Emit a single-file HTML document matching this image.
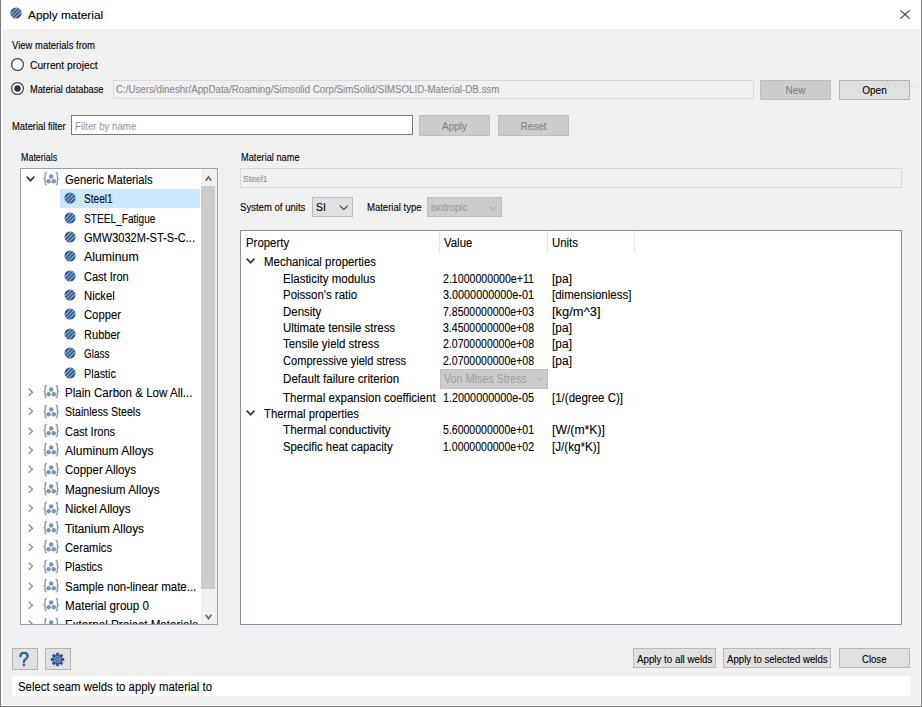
<!DOCTYPE html><html><head><meta charset="utf-8"><style>
html,body{margin:0;padding:0;width:922px;height:707px;overflow:hidden;background:#f0f0f0;}
body{position:relative;font-family:"Liberation Sans",sans-serif;}
.t{position:absolute;white-space:pre;line-height:normal;-webkit-text-stroke:0.1px currentColor;}
.b{position:absolute;box-sizing:content-box;}
svg.b{overflow:visible;}
</style></head><body>
<div class="b" style="left:0px;top:0px;width:922px;height:707px;background:#f0f0f0;"></div>
<div class="b" style="left:0px;top:0px;width:922px;height:29px;background:#ffffff;"></div>
<div class="b" style="left:0px;top:0px;width:1px;height:707px;background:#7a7a7a;"></div>
<div class="b" style="left:921px;top:0px;width:1px;height:707px;background:#7a7a7a;"></div>
<div class="b" style="left:0px;top:706px;width:922px;height:1px;background:#7a7a7a;"></div>
<div class="b" style="left:1px;top:29px;width:1px;height:677px;background:#ffffff;"></div>
<div class="b" style="left:920px;top:29px;width:1px;height:677px;background:#ffffff;"></div>
<div class="b" style="left:1px;top:705px;width:920px;height:1px;background:#ffffff;"></div>
<svg class="b" style="left:9.25px;top:6.4px;" width="14" height="14" viewBox="0 0 14 14"><defs><clipPath id="c162_134"><circle cx="7" cy="7" r="5.6"/></clipPath></defs><circle cx="7" cy="7" r="5.6" fill="#2a5a90"/><g clip-path="url(#c162_134)" stroke="#98afcb" stroke-width="1.1"><line x1="-4.94" y1="15.06" x2="15.06" y2="-4.94" /><line x1="-3.00" y1="17.00" x2="17.00" y2="-3.00" /><line x1="-1.06" y1="18.94" x2="18.94" y2="-1.06" /></g></svg>
<div class="t" style="left:28.1px;top:8.00px;font-size:11.6px;color:#000;transform:scaleX(1.0236);transform-origin:0 0;">Apply material</div>
<svg class="b" style="left:900px;top:10px;" width="10" height="9" viewBox="0 0 10 9"><path d="M0.3,0.3 L9.7,8.7 M9.7,0.3 L0.3,8.7" stroke="#333" stroke-width="1.1" fill="none"/></svg>
<div class="t" style="left:11.5px;top:40.00px;font-size:10.0px;color:#000;transform:scaleX(0.9472);transform-origin:0 0;">View materials from</div>
<svg class="b" style="left:11px;top:58px;" width="14" height="14" viewBox="0 0 14 14"><circle cx="6.5" cy="6.5" r="5.9" fill="#fff" stroke="#4a4a4a" stroke-width="1.3"/></svg>
<div class="t" style="left:30px;top:60.00px;font-size:10.0px;color:#000;transform:scaleX(1.0236);transform-origin:0 0;">Current project</div>
<svg class="b" style="left:11px;top:82px;" width="14" height="14" viewBox="0 0 14 14"><circle cx="6.5" cy="6.5" r="5.9" fill="#fff" stroke="#4a4a4a" stroke-width="1.3"/><circle cx="6.5" cy="6.5" r="3.2" fill="#333"/></svg>
<div class="t" style="left:30px;top:84.00px;font-size:10.0px;color:#000;transform:scaleX(0.9245);transform-origin:0 0;">Material database</div>
<div class="b" style="left:113px;top:79.5px;width:639px;height:17px;background:#f0f0f0;border:1px solid #d9d9d9;"></div>
<div class="t" style="left:116.4px;top:84.00px;font-size:10.0px;color:#8a8a8a;transform:scaleX(0.9728);transform-origin:0 0;">C:/Users/dineshr/AppData/Roaming/Simsolid Corp/SimSolid/SIMSOLID-Material-DB.ssm</div>
<div class="b" style="left:760px;top:79.5px;width:69px;height:18px;background:#cccccc;border:1px solid #bfbfbf;"></div>
<div class="t" style="left:695.5px;width:200px;text-align:center;top:85.00px;font-size:10.0px;color:#838383">New</div>
<div class="b" style="left:839px;top:79.5px;width:69px;height:18px;background:#e1e1e1;border:1px solid #b3b5b8;"></div>
<div class="t" style="left:774.5px;width:200px;text-align:center;top:85.00px;font-size:10.0px;color:#000">Open</div>
<div class="b" style="left:870px;top:70px;width:50px;height:30px;overflow:hidden;"><div class="t" style="left:11.5px;top:7.8px;font-size:11px;color:rgba(0,0,0,0.07);-webkit-text-stroke:0">Windows</div></div>
<div class="t" style="left:11.7px;top:121.00px;font-size:10.0px;color:#000;transform:scaleX(0.9380);transform-origin:0 0;">Material filter</div>
<div class="b" style="left:71px;top:115px;width:340px;height:18px;background:#ffffff;border:1px solid #7a7a7a;"></div>
<div class="t" style="left:74.8px;top:121.00px;font-size:10.0px;color:#9a9a9a;transform:scaleX(0.9675);transform-origin:0 0;">Filter by name</div>
<div class="b" style="left:419px;top:115px;width:69px;height:19px;background:#cccccc;border:1px solid #bfbfbf;"></div>
<div class="t" style="left:354.5px;width:200px;text-align:center;top:121.00px;font-size:10.0px;color:#838383">Apply</div>
<div class="b" style="left:498px;top:115px;width:69px;height:19px;background:#cccccc;border:1px solid #bfbfbf;"></div>
<div class="t" style="left:433.5px;width:200px;text-align:center;top:121.00px;font-size:10.0px;color:#838383">Reset</div>
<div class="t" style="left:20.7px;top:152.00px;font-size:10.0px;color:#000;transform:scaleX(0.8921);transform-origin:0 0;">Materials</div>
<div class="b" style="left:20px;top:168px;width:196px;height:455px;background:#ffffff;border:1px solid #9aa0a6;"></div>
<div class="b" style="left:201px;top:169px;width:16px;height:455px;background:#f0f0f0;"></div>
<div class="b" style="left:201px;top:186px;width:14px;height:403px;background:#cdcdcd;"></div>
<svg class="b" style="left:205px;top:175.5px;" width="7" height="6" viewBox="0 0 7 6"><polyline points="0.7,4.7 3.5,0.9 6.3,4.7" fill="none" stroke="#606060" stroke-width="1.6"/></svg>
<svg class="b" style="left:205px;top:613.5px;" width="7" height="6" viewBox="0 0 7 6"><polyline points="0.7,0.7 3.5,4.7 6.3,0.7" fill="none" stroke="#606060" stroke-width="1.6"/></svg>
<div class="b" style="left:21px;top:169px;width:180px;height:455px;overflow:hidden;">
<svg class="b" style="left:4.600000000000001px;top:6.900000000000006px;" width="9" height="6" viewBox="0 0 9 6"><polyline points="0.7,0.7 4.5,4.7 8.3,0.7" fill="none" stroke="#3a3a3a" stroke-width="1.7"/></svg>
<svg class="b" style="left:22px;top:3.300000000000006px;" width="17" height="14" viewBox="0 0 17 14"><path d="M3.7,0.5 C2.5,0.5 2.1,1.1 2.1,2.2 L2.1,5.2 C2.1,6.1 1.6,6.7 0.5,6.7 C1.6,6.7 2.1,7.3 2.1,8.2 L2.1,11.2 C2.1,12.3 2.5,12.9 3.7,12.9" fill="none" stroke="#7b97b4" stroke-width="1.3"/><g transform="translate(16.4,0) scale(-1,1)"><path d="M3.7,0.5 C2.5,0.5 2.1,1.1 2.1,2.2 L2.1,5.2 C2.1,6.1 1.6,6.7 0.5,6.7 C1.6,6.7 2.1,7.3 2.1,8.2 L2.1,11.2 C2.1,12.3 2.5,12.9 3.7,12.9" fill="none" stroke="#7b97b4" stroke-width="1.3"/></g><circle cx="8.2" cy="4.5" r="2.25" fill="#7b97b4"/><circle cx="5.6" cy="9.2" r="2.25" fill="#7b97b4"/><circle cx="10.8" cy="9.2" r="2.25" fill="#7b97b4"/></svg>
<div class="t" style="left:44px;top:4.00px;font-size:12px;color:#000;transform:scaleX(0.9316);transform-origin:0 0;">Generic Materials</div>
<div class="b" style="left:39px;top:19.670000000000016px;width:140px;height:19px;background:#cce8ff;"></div>
<svg class="b" style="left:42.400000000000006px;top:22.27000000000001px;" width="14" height="14" viewBox="0 0 14 14"><defs><clipPath id="c494_292"><circle cx="7" cy="7" r="5.5"/></clipPath></defs><circle cx="7" cy="7" r="5.5" fill="#2a5a90"/><g clip-path="url(#c494_292)" stroke="#98afcb" stroke-width="1.1"><line x1="-4.94" y1="15.06" x2="15.06" y2="-4.94" /><line x1="-3.00" y1="17.00" x2="17.00" y2="-3.00" /><line x1="-1.06" y1="18.94" x2="18.94" y2="-1.06" /></g></svg>
<div class="t" style="left:63.3px;top:23.00px;font-size:12px;color:#000;transform:scaleX(0.8404);transform-origin:0 0;">Steel1</div>
<svg class="b" style="left:42.400000000000006px;top:41.640000000000015px;" width="14" height="14" viewBox="0 0 14 14"><defs><clipPath id="c494_486"><circle cx="7" cy="7" r="5.5"/></clipPath></defs><circle cx="7" cy="7" r="5.5" fill="#2a5a90"/><g clip-path="url(#c494_486)" stroke="#98afcb" stroke-width="1.1"><line x1="-4.94" y1="15.06" x2="15.06" y2="-4.94" /><line x1="-3.00" y1="17.00" x2="17.00" y2="-3.00" /><line x1="-1.06" y1="18.94" x2="18.94" y2="-1.06" /></g></svg>
<div class="t" style="left:63.3px;top:43.00px;font-size:12px;color:#000;transform:scaleX(0.8440);transform-origin:0 0;">STEEL_Fatigue</div>
<svg class="b" style="left:42.400000000000006px;top:61.00999999999999px;" width="14" height="14" viewBox="0 0 14 14"><defs><clipPath id="c494_680"><circle cx="7" cy="7" r="5.5"/></clipPath></defs><circle cx="7" cy="7" r="5.5" fill="#2a5a90"/><g clip-path="url(#c494_680)" stroke="#98afcb" stroke-width="1.1"><line x1="-4.94" y1="15.06" x2="15.06" y2="-4.94" /><line x1="-3.00" y1="17.00" x2="17.00" y2="-3.00" /><line x1="-1.06" y1="18.94" x2="18.94" y2="-1.06" /></g></svg>
<div class="t" style="left:63.3px;top:62.00px;font-size:12px;color:#000;transform:scaleX(0.9197);transform-origin:0 0;">GMW3032M-ST-S-C...</div>
<svg class="b" style="left:42.400000000000006px;top:80.38px;" width="14" height="14" viewBox="0 0 14 14"><defs><clipPath id="c494_873"><circle cx="7" cy="7" r="5.5"/></clipPath></defs><circle cx="7" cy="7" r="5.5" fill="#2a5a90"/><g clip-path="url(#c494_873)" stroke="#98afcb" stroke-width="1.1"><line x1="-4.94" y1="15.06" x2="15.06" y2="-4.94" /><line x1="-3.00" y1="17.00" x2="17.00" y2="-3.00" /><line x1="-1.06" y1="18.94" x2="18.94" y2="-1.06" /></g></svg>
<div class="t" style="left:63.3px;top:81.00px;font-size:12px;color:#000;transform:scaleX(1.0251);transform-origin:0 0;">Aluminum</div>
<svg class="b" style="left:42.400000000000006px;top:99.75px;" width="14" height="14" viewBox="0 0 14 14"><defs><clipPath id="c494_1067"><circle cx="7" cy="7" r="5.5"/></clipPath></defs><circle cx="7" cy="7" r="5.5" fill="#2a5a90"/><g clip-path="url(#c494_1067)" stroke="#98afcb" stroke-width="1.1"><line x1="-4.94" y1="15.06" x2="15.06" y2="-4.94" /><line x1="-3.00" y1="17.00" x2="17.00" y2="-3.00" /><line x1="-1.06" y1="18.94" x2="18.94" y2="-1.06" /></g></svg>
<div class="t" style="left:63.3px;top:101.00px;font-size:12px;color:#000;transform:scaleX(0.9181);transform-origin:0 0;">Cast Iron</div>
<svg class="b" style="left:42.400000000000006px;top:119.12px;" width="14" height="14" viewBox="0 0 14 14"><defs><clipPath id="c494_1261"><circle cx="7" cy="7" r="5.5"/></clipPath></defs><circle cx="7" cy="7" r="5.5" fill="#2a5a90"/><g clip-path="url(#c494_1261)" stroke="#98afcb" stroke-width="1.1"><line x1="-4.94" y1="15.06" x2="15.06" y2="-4.94" /><line x1="-3.00" y1="17.00" x2="17.00" y2="-3.00" /><line x1="-1.06" y1="18.94" x2="18.94" y2="-1.06" /></g></svg>
<div class="t" style="left:63.3px;top:120.00px;font-size:12px;color:#000;transform:scaleX(0.9427);transform-origin:0 0;">Nickel</div>
<svg class="b" style="left:42.400000000000006px;top:138.49px;" width="14" height="14" viewBox="0 0 14 14"><defs><clipPath id="c494_1454"><circle cx="7" cy="7" r="5.5"/></clipPath></defs><circle cx="7" cy="7" r="5.5" fill="#2a5a90"/><g clip-path="url(#c494_1454)" stroke="#98afcb" stroke-width="1.1"><line x1="-4.94" y1="15.06" x2="15.06" y2="-4.94" /><line x1="-3.00" y1="17.00" x2="17.00" y2="-3.00" /><line x1="-1.06" y1="18.94" x2="18.94" y2="-1.06" /></g></svg>
<div class="t" style="left:63.3px;top:139.00px;font-size:12px;color:#000;transform:scaleX(0.9375);transform-origin:0 0;">Copper</div>
<svg class="b" style="left:42.400000000000006px;top:157.86px;" width="14" height="14" viewBox="0 0 14 14"><defs><clipPath id="c494_1648"><circle cx="7" cy="7" r="5.5"/></clipPath></defs><circle cx="7" cy="7" r="5.5" fill="#2a5a90"/><g clip-path="url(#c494_1648)" stroke="#98afcb" stroke-width="1.1"><line x1="-4.94" y1="15.06" x2="15.06" y2="-4.94" /><line x1="-3.00" y1="17.00" x2="17.00" y2="-3.00" /><line x1="-1.06" y1="18.94" x2="18.94" y2="-1.06" /></g></svg>
<div class="t" style="left:63.3px;top:159.00px;font-size:12px;color:#000;transform:scaleX(0.9223);transform-origin:0 0;">Rubber</div>
<svg class="b" style="left:42.400000000000006px;top:177.23000000000002px;" width="14" height="14" viewBox="0 0 14 14"><defs><clipPath id="c494_1842"><circle cx="7" cy="7" r="5.5"/></clipPath></defs><circle cx="7" cy="7" r="5.5" fill="#2a5a90"/><g clip-path="url(#c494_1842)" stroke="#98afcb" stroke-width="1.1"><line x1="-4.94" y1="15.06" x2="15.06" y2="-4.94" /><line x1="-3.00" y1="17.00" x2="17.00" y2="-3.00" /><line x1="-1.06" y1="18.94" x2="18.94" y2="-1.06" /></g></svg>
<div class="t" style="left:63.3px;top:178.00px;font-size:12px;color:#000;transform:scaleX(0.8277);transform-origin:0 0;">Glass</div>
<svg class="b" style="left:42.400000000000006px;top:196.60000000000002px;" width="14" height="14" viewBox="0 0 14 14"><defs><clipPath id="c494_2036"><circle cx="7" cy="7" r="5.5"/></clipPath></defs><circle cx="7" cy="7" r="5.5" fill="#2a5a90"/><g clip-path="url(#c494_2036)" stroke="#98afcb" stroke-width="1.1"><line x1="-4.94" y1="15.06" x2="15.06" y2="-4.94" /><line x1="-3.00" y1="17.00" x2="17.00" y2="-3.00" /><line x1="-1.06" y1="18.94" x2="18.94" y2="-1.06" /></g></svg>
<div class="t" style="left:63.3px;top:198.00px;font-size:12px;color:#000;transform:scaleX(0.9026);transform-origin:0 0;">Plastic</div>
<svg class="b" style="left:7px;top:218.97000000000003px;" width="6" height="8.5" viewBox="0 0 6 8.5"><polyline points="0.7,0.7 4.5,4.25 0.7,7.8" fill="none" stroke="#909090" stroke-width="1.3"/></svg>
<svg class="b" style="left:22px;top:216.37000000000003px;" width="17" height="14" viewBox="0 0 17 14"><path d="M3.7,0.5 C2.5,0.5 2.1,1.1 2.1,2.2 L2.1,5.2 C2.1,6.1 1.6,6.7 0.5,6.7 C1.6,6.7 2.1,7.3 2.1,8.2 L2.1,11.2 C2.1,12.3 2.5,12.9 3.7,12.9" fill="none" stroke="#7b97b4" stroke-width="1.3"/><g transform="translate(16.4,0) scale(-1,1)"><path d="M3.7,0.5 C2.5,0.5 2.1,1.1 2.1,2.2 L2.1,5.2 C2.1,6.1 1.6,6.7 0.5,6.7 C1.6,6.7 2.1,7.3 2.1,8.2 L2.1,11.2 C2.1,12.3 2.5,12.9 3.7,12.9" fill="none" stroke="#7b97b4" stroke-width="1.3"/></g><circle cx="8.2" cy="4.5" r="2.25" fill="#7b97b4"/><circle cx="5.6" cy="9.2" r="2.25" fill="#7b97b4"/><circle cx="10.8" cy="9.2" r="2.25" fill="#7b97b4"/></svg>
<div class="t" style="left:44px;top:217.00px;font-size:12px;color:#000;transform:scaleX(0.9653);transform-origin:0 0;">Plain Carbon &amp; Low All...</div>
<svg class="b" style="left:7px;top:238.34000000000003px;" width="6" height="8.5" viewBox="0 0 6 8.5"><polyline points="0.7,0.7 4.5,4.25 0.7,7.8" fill="none" stroke="#909090" stroke-width="1.3"/></svg>
<svg class="b" style="left:22px;top:235.74000000000004px;" width="17" height="14" viewBox="0 0 17 14"><path d="M3.7,0.5 C2.5,0.5 2.1,1.1 2.1,2.2 L2.1,5.2 C2.1,6.1 1.6,6.7 0.5,6.7 C1.6,6.7 2.1,7.3 2.1,8.2 L2.1,11.2 C2.1,12.3 2.5,12.9 3.7,12.9" fill="none" stroke="#7b97b4" stroke-width="1.3"/><g transform="translate(16.4,0) scale(-1,1)"><path d="M3.7,0.5 C2.5,0.5 2.1,1.1 2.1,2.2 L2.1,5.2 C2.1,6.1 1.6,6.7 0.5,6.7 C1.6,6.7 2.1,7.3 2.1,8.2 L2.1,11.2 C2.1,12.3 2.5,12.9 3.7,12.9" fill="none" stroke="#7b97b4" stroke-width="1.3"/></g><circle cx="8.2" cy="4.5" r="2.25" fill="#7b97b4"/><circle cx="5.6" cy="9.2" r="2.25" fill="#7b97b4"/><circle cx="10.8" cy="9.2" r="2.25" fill="#7b97b4"/></svg>
<div class="t" style="left:44px;top:236.00px;font-size:12px;color:#000;transform:scaleX(0.8842);transform-origin:0 0;">Stainless Steels</div>
<svg class="b" style="left:7px;top:257.71000000000004px;" width="6" height="8.5" viewBox="0 0 6 8.5"><polyline points="0.7,0.7 4.5,4.25 0.7,7.8" fill="none" stroke="#909090" stroke-width="1.3"/></svg>
<svg class="b" style="left:22px;top:255.11000000000004px;" width="17" height="14" viewBox="0 0 17 14"><path d="M3.7,0.5 C2.5,0.5 2.1,1.1 2.1,2.2 L2.1,5.2 C2.1,6.1 1.6,6.7 0.5,6.7 C1.6,6.7 2.1,7.3 2.1,8.2 L2.1,11.2 C2.1,12.3 2.5,12.9 3.7,12.9" fill="none" stroke="#7b97b4" stroke-width="1.3"/><g transform="translate(16.4,0) scale(-1,1)"><path d="M3.7,0.5 C2.5,0.5 2.1,1.1 2.1,2.2 L2.1,5.2 C2.1,6.1 1.6,6.7 0.5,6.7 C1.6,6.7 2.1,7.3 2.1,8.2 L2.1,11.2 C2.1,12.3 2.5,12.9 3.7,12.9" fill="none" stroke="#7b97b4" stroke-width="1.3"/></g><circle cx="8.2" cy="4.5" r="2.25" fill="#7b97b4"/><circle cx="5.6" cy="9.2" r="2.25" fill="#7b97b4"/><circle cx="10.8" cy="9.2" r="2.25" fill="#7b97b4"/></svg>
<div class="t" style="left:44px;top:256.00px;font-size:12px;color:#000;transform:scaleX(0.9143);transform-origin:0 0;">Cast Irons</div>
<svg class="b" style="left:7px;top:277.08000000000004px;" width="6" height="8.5" viewBox="0 0 6 8.5"><polyline points="0.7,0.7 4.5,4.25 0.7,7.8" fill="none" stroke="#909090" stroke-width="1.3"/></svg>
<svg class="b" style="left:22px;top:274.48px;" width="17" height="14" viewBox="0 0 17 14"><path d="M3.7,0.5 C2.5,0.5 2.1,1.1 2.1,2.2 L2.1,5.2 C2.1,6.1 1.6,6.7 0.5,6.7 C1.6,6.7 2.1,7.3 2.1,8.2 L2.1,11.2 C2.1,12.3 2.5,12.9 3.7,12.9" fill="none" stroke="#7b97b4" stroke-width="1.3"/><g transform="translate(16.4,0) scale(-1,1)"><path d="M3.7,0.5 C2.5,0.5 2.1,1.1 2.1,2.2 L2.1,5.2 C2.1,6.1 1.6,6.7 0.5,6.7 C1.6,6.7 2.1,7.3 2.1,8.2 L2.1,11.2 C2.1,12.3 2.5,12.9 3.7,12.9" fill="none" stroke="#7b97b4" stroke-width="1.3"/></g><circle cx="8.2" cy="4.5" r="2.25" fill="#7b97b4"/><circle cx="5.6" cy="9.2" r="2.25" fill="#7b97b4"/><circle cx="10.8" cy="9.2" r="2.25" fill="#7b97b4"/></svg>
<div class="t" style="left:44px;top:275.00px;font-size:12px;color:#000;transform:scaleX(1.0053);transform-origin:0 0;">Aluminum Alloys</div>
<svg class="b" style="left:7px;top:296.45000000000005px;" width="6" height="8.5" viewBox="0 0 6 8.5"><polyline points="0.7,0.7 4.5,4.25 0.7,7.8" fill="none" stroke="#909090" stroke-width="1.3"/></svg>
<svg class="b" style="left:22px;top:293.85px;" width="17" height="14" viewBox="0 0 17 14"><path d="M3.7,0.5 C2.5,0.5 2.1,1.1 2.1,2.2 L2.1,5.2 C2.1,6.1 1.6,6.7 0.5,6.7 C1.6,6.7 2.1,7.3 2.1,8.2 L2.1,11.2 C2.1,12.3 2.5,12.9 3.7,12.9" fill="none" stroke="#7b97b4" stroke-width="1.3"/><g transform="translate(16.4,0) scale(-1,1)"><path d="M3.7,0.5 C2.5,0.5 2.1,1.1 2.1,2.2 L2.1,5.2 C2.1,6.1 1.6,6.7 0.5,6.7 C1.6,6.7 2.1,7.3 2.1,8.2 L2.1,11.2 C2.1,12.3 2.5,12.9 3.7,12.9" fill="none" stroke="#7b97b4" stroke-width="1.3"/></g><circle cx="8.2" cy="4.5" r="2.25" fill="#7b97b4"/><circle cx="5.6" cy="9.2" r="2.25" fill="#7b97b4"/><circle cx="10.8" cy="9.2" r="2.25" fill="#7b97b4"/></svg>
<div class="t" style="left:44px;top:294.00px;font-size:12px;color:#000;transform:scaleX(0.9589);transform-origin:0 0;">Copper Alloys</div>
<svg class="b" style="left:7px;top:315.82000000000005px;" width="6" height="8.5" viewBox="0 0 6 8.5"><polyline points="0.7,0.7 4.5,4.25 0.7,7.8" fill="none" stroke="#909090" stroke-width="1.3"/></svg>
<svg class="b" style="left:22px;top:313.22px;" width="17" height="14" viewBox="0 0 17 14"><path d="M3.7,0.5 C2.5,0.5 2.1,1.1 2.1,2.2 L2.1,5.2 C2.1,6.1 1.6,6.7 0.5,6.7 C1.6,6.7 2.1,7.3 2.1,8.2 L2.1,11.2 C2.1,12.3 2.5,12.9 3.7,12.9" fill="none" stroke="#7b97b4" stroke-width="1.3"/><g transform="translate(16.4,0) scale(-1,1)"><path d="M3.7,0.5 C2.5,0.5 2.1,1.1 2.1,2.2 L2.1,5.2 C2.1,6.1 1.6,6.7 0.5,6.7 C1.6,6.7 2.1,7.3 2.1,8.2 L2.1,11.2 C2.1,12.3 2.5,12.9 3.7,12.9" fill="none" stroke="#7b97b4" stroke-width="1.3"/></g><circle cx="8.2" cy="4.5" r="2.25" fill="#7b97b4"/><circle cx="5.6" cy="9.2" r="2.25" fill="#7b97b4"/><circle cx="10.8" cy="9.2" r="2.25" fill="#7b97b4"/></svg>
<div class="t" style="left:44px;top:314.00px;font-size:12px;color:#000;transform:scaleX(0.9771);transform-origin:0 0;">Magnesium Alloys</div>
<svg class="b" style="left:7px;top:335.19000000000005px;" width="6" height="8.5" viewBox="0 0 6 8.5"><polyline points="0.7,0.7 4.5,4.25 0.7,7.8" fill="none" stroke="#909090" stroke-width="1.3"/></svg>
<svg class="b" style="left:22px;top:332.59000000000003px;" width="17" height="14" viewBox="0 0 17 14"><path d="M3.7,0.5 C2.5,0.5 2.1,1.1 2.1,2.2 L2.1,5.2 C2.1,6.1 1.6,6.7 0.5,6.7 C1.6,6.7 2.1,7.3 2.1,8.2 L2.1,11.2 C2.1,12.3 2.5,12.9 3.7,12.9" fill="none" stroke="#7b97b4" stroke-width="1.3"/><g transform="translate(16.4,0) scale(-1,1)"><path d="M3.7,0.5 C2.5,0.5 2.1,1.1 2.1,2.2 L2.1,5.2 C2.1,6.1 1.6,6.7 0.5,6.7 C1.6,6.7 2.1,7.3 2.1,8.2 L2.1,11.2 C2.1,12.3 2.5,12.9 3.7,12.9" fill="none" stroke="#7b97b4" stroke-width="1.3"/></g><circle cx="8.2" cy="4.5" r="2.25" fill="#7b97b4"/><circle cx="5.6" cy="9.2" r="2.25" fill="#7b97b4"/><circle cx="10.8" cy="9.2" r="2.25" fill="#7b97b4"/></svg>
<div class="t" style="left:44px;top:333.00px;font-size:12px;color:#000;transform:scaleX(0.9724);transform-origin:0 0;">Nickel Alloys</div>
<svg class="b" style="left:7px;top:354.56000000000006px;" width="6" height="8.5" viewBox="0 0 6 8.5"><polyline points="0.7,0.7 4.5,4.25 0.7,7.8" fill="none" stroke="#909090" stroke-width="1.3"/></svg>
<svg class="b" style="left:22px;top:351.96000000000004px;" width="17" height="14" viewBox="0 0 17 14"><path d="M3.7,0.5 C2.5,0.5 2.1,1.1 2.1,2.2 L2.1,5.2 C2.1,6.1 1.6,6.7 0.5,6.7 C1.6,6.7 2.1,7.3 2.1,8.2 L2.1,11.2 C2.1,12.3 2.5,12.9 3.7,12.9" fill="none" stroke="#7b97b4" stroke-width="1.3"/><g transform="translate(16.4,0) scale(-1,1)"><path d="M3.7,0.5 C2.5,0.5 2.1,1.1 2.1,2.2 L2.1,5.2 C2.1,6.1 1.6,6.7 0.5,6.7 C1.6,6.7 2.1,7.3 2.1,8.2 L2.1,11.2 C2.1,12.3 2.5,12.9 3.7,12.9" fill="none" stroke="#7b97b4" stroke-width="1.3"/></g><circle cx="8.2" cy="4.5" r="2.25" fill="#7b97b4"/><circle cx="5.6" cy="9.2" r="2.25" fill="#7b97b4"/><circle cx="10.8" cy="9.2" r="2.25" fill="#7b97b4"/></svg>
<div class="t" style="left:44px;top:353.00px;font-size:12px;color:#000;transform:scaleX(0.9844);transform-origin:0 0;">Titanium Alloys</div>
<svg class="b" style="left:7px;top:373.93000000000006px;" width="6" height="8.5" viewBox="0 0 6 8.5"><polyline points="0.7,0.7 4.5,4.25 0.7,7.8" fill="none" stroke="#909090" stroke-width="1.3"/></svg>
<svg class="b" style="left:22px;top:371.33000000000004px;" width="17" height="14" viewBox="0 0 17 14"><path d="M3.7,0.5 C2.5,0.5 2.1,1.1 2.1,2.2 L2.1,5.2 C2.1,6.1 1.6,6.7 0.5,6.7 C1.6,6.7 2.1,7.3 2.1,8.2 L2.1,11.2 C2.1,12.3 2.5,12.9 3.7,12.9" fill="none" stroke="#7b97b4" stroke-width="1.3"/><g transform="translate(16.4,0) scale(-1,1)"><path d="M3.7,0.5 C2.5,0.5 2.1,1.1 2.1,2.2 L2.1,5.2 C2.1,6.1 1.6,6.7 0.5,6.7 C1.6,6.7 2.1,7.3 2.1,8.2 L2.1,11.2 C2.1,12.3 2.5,12.9 3.7,12.9" fill="none" stroke="#7b97b4" stroke-width="1.3"/></g><circle cx="8.2" cy="4.5" r="2.25" fill="#7b97b4"/><circle cx="5.6" cy="9.2" r="2.25" fill="#7b97b4"/><circle cx="10.8" cy="9.2" r="2.25" fill="#7b97b4"/></svg>
<div class="t" style="left:44px;top:372.00px;font-size:12px;color:#000;transform:scaleX(0.9275);transform-origin:0 0;">Ceramics</div>
<svg class="b" style="left:7px;top:393.30000000000007px;" width="6" height="8.5" viewBox="0 0 6 8.5"><polyline points="0.7,0.7 4.5,4.25 0.7,7.8" fill="none" stroke="#909090" stroke-width="1.3"/></svg>
<svg class="b" style="left:22px;top:390.70000000000005px;" width="17" height="14" viewBox="0 0 17 14"><path d="M3.7,0.5 C2.5,0.5 2.1,1.1 2.1,2.2 L2.1,5.2 C2.1,6.1 1.6,6.7 0.5,6.7 C1.6,6.7 2.1,7.3 2.1,8.2 L2.1,11.2 C2.1,12.3 2.5,12.9 3.7,12.9" fill="none" stroke="#7b97b4" stroke-width="1.3"/><g transform="translate(16.4,0) scale(-1,1)"><path d="M3.7,0.5 C2.5,0.5 2.1,1.1 2.1,2.2 L2.1,5.2 C2.1,6.1 1.6,6.7 0.5,6.7 C1.6,6.7 2.1,7.3 2.1,8.2 L2.1,11.2 C2.1,12.3 2.5,12.9 3.7,12.9" fill="none" stroke="#7b97b4" stroke-width="1.3"/></g><circle cx="8.2" cy="4.5" r="2.25" fill="#7b97b4"/><circle cx="5.6" cy="9.2" r="2.25" fill="#7b97b4"/><circle cx="10.8" cy="9.2" r="2.25" fill="#7b97b4"/></svg>
<div class="t" style="left:44px;top:391.00px;font-size:12px;color:#000;transform:scaleX(0.9070);transform-origin:0 0;">Plastics</div>
<svg class="b" style="left:7px;top:412.6700000000001px;" width="6" height="8.5" viewBox="0 0 6 8.5"><polyline points="0.7,0.7 4.5,4.25 0.7,7.8" fill="none" stroke="#909090" stroke-width="1.3"/></svg>
<svg class="b" style="left:22px;top:410.07000000000005px;" width="17" height="14" viewBox="0 0 17 14"><path d="M3.7,0.5 C2.5,0.5 2.1,1.1 2.1,2.2 L2.1,5.2 C2.1,6.1 1.6,6.7 0.5,6.7 C1.6,6.7 2.1,7.3 2.1,8.2 L2.1,11.2 C2.1,12.3 2.5,12.9 3.7,12.9" fill="none" stroke="#7b97b4" stroke-width="1.3"/><g transform="translate(16.4,0) scale(-1,1)"><path d="M3.7,0.5 C2.5,0.5 2.1,1.1 2.1,2.2 L2.1,5.2 C2.1,6.1 1.6,6.7 0.5,6.7 C1.6,6.7 2.1,7.3 2.1,8.2 L2.1,11.2 C2.1,12.3 2.5,12.9 3.7,12.9" fill="none" stroke="#7b97b4" stroke-width="1.3"/></g><circle cx="8.2" cy="4.5" r="2.25" fill="#7b97b4"/><circle cx="5.6" cy="9.2" r="2.25" fill="#7b97b4"/><circle cx="10.8" cy="9.2" r="2.25" fill="#7b97b4"/></svg>
<div class="t" style="left:44px;top:411.00px;font-size:12px;color:#000;transform:scaleX(0.9556);transform-origin:0 0;">Sample non-linear mate...</div>
<svg class="b" style="left:7px;top:432.0400000000001px;" width="6" height="8.5" viewBox="0 0 6 8.5"><polyline points="0.7,0.7 4.5,4.25 0.7,7.8" fill="none" stroke="#909090" stroke-width="1.3"/></svg>
<svg class="b" style="left:22px;top:429.44000000000005px;" width="17" height="14" viewBox="0 0 17 14"><path d="M3.7,0.5 C2.5,0.5 2.1,1.1 2.1,2.2 L2.1,5.2 C2.1,6.1 1.6,6.7 0.5,6.7 C1.6,6.7 2.1,7.3 2.1,8.2 L2.1,11.2 C2.1,12.3 2.5,12.9 3.7,12.9" fill="none" stroke="#7b97b4" stroke-width="1.3"/><g transform="translate(16.4,0) scale(-1,1)"><path d="M3.7,0.5 C2.5,0.5 2.1,1.1 2.1,2.2 L2.1,5.2 C2.1,6.1 1.6,6.7 0.5,6.7 C1.6,6.7 2.1,7.3 2.1,8.2 L2.1,11.2 C2.1,12.3 2.5,12.9 3.7,12.9" fill="none" stroke="#7b97b4" stroke-width="1.3"/></g><circle cx="8.2" cy="4.5" r="2.25" fill="#7b97b4"/><circle cx="5.6" cy="9.2" r="2.25" fill="#7b97b4"/><circle cx="10.8" cy="9.2" r="2.25" fill="#7b97b4"/></svg>
<div class="t" style="left:44px;top:430.00px;font-size:12px;color:#000;transform:scaleX(0.9686);transform-origin:0 0;">Material group 0</div>
<svg class="b" style="left:7px;top:451.4100000000001px;" width="6" height="8.5" viewBox="0 0 6 8.5"><polyline points="0.7,0.7 4.5,4.25 0.7,7.8" fill="none" stroke="#909090" stroke-width="1.3"/></svg>
<svg class="b" style="left:22px;top:448.81000000000006px;" width="17" height="14" viewBox="0 0 17 14"><path d="M3.7,0.5 C2.5,0.5 2.1,1.1 2.1,2.2 L2.1,5.2 C2.1,6.1 1.6,6.7 0.5,6.7 C1.6,6.7 2.1,7.3 2.1,8.2 L2.1,11.2 C2.1,12.3 2.5,12.9 3.7,12.9" fill="none" stroke="#7b97b4" stroke-width="1.3"/><g transform="translate(16.4,0) scale(-1,1)"><path d="M3.7,0.5 C2.5,0.5 2.1,1.1 2.1,2.2 L2.1,5.2 C2.1,6.1 1.6,6.7 0.5,6.7 C1.6,6.7 2.1,7.3 2.1,8.2 L2.1,11.2 C2.1,12.3 2.5,12.9 3.7,12.9" fill="none" stroke="#7b97b4" stroke-width="1.3"/></g><circle cx="8.2" cy="4.5" r="2.25" fill="#7b97b4"/><circle cx="5.6" cy="9.2" r="2.25" fill="#7b97b4"/><circle cx="10.8" cy="9.2" r="2.25" fill="#7b97b4"/></svg>
<div class="t" style="left:44px;top:449.00px;font-size:12px;color:#000;transform:scaleX(0.9728);transform-origin:0 0;">External Project Materials</div>
</div>
<div class="t" style="left:240.5px;top:152.00px;font-size:10.0px;color:#000;transform:scaleX(0.9249);transform-origin:0 0;">Material name</div>
<div class="b" style="left:240px;top:168px;width:660px;height:18px;background:#f0f0f0;border:1px solid #d9d9d9;"></div>
<div class="t" style="left:243px;top:173.00px;font-size:9.8px;color:#8f8f8f;transform:scaleX(0.8891);transform-origin:0 0;">Steel1</div>
<div class="t" style="left:240.4px;top:202.00px;font-size:10.0px;color:#000;transform:scaleX(0.9567);transform-origin:0 0;">System of units</div>
<div class="b" style="left:312px;top:197px;width:39px;height:18px;background:#e1e1e1;border:1px solid #bdbdbd;"></div>
<div class="t" style="left:315.5px;top:202.00px;font-size:10.0px;color:#000;transform:scaleX(1.0367);transform-origin:0 0;">SI</div>
<svg class="b" style="left:338.8px;top:205.3px;" width="9.5" height="5.7" viewBox="0 0 9.5 5.7"><polyline points="0.7,0.7 4.75,4.4 8.8,0.7" fill="none" stroke="#444" stroke-width="1.1"/></svg>
<div class="t" style="left:366.5px;top:202.00px;font-size:10.0px;color:#000;transform:scaleX(0.9520);transform-origin:0 0;">Material type</div>
<div class="b" style="left:427px;top:197px;width:73px;height:18px;background:#cccccc;border:1px solid #bfbfbf;"></div>
<div class="t" style="left:431.3px;top:202.00px;font-size:10.0px;color:#999999;transform:scaleX(0.9772);transform-origin:0 0;">isotropic</div>
<svg class="b" style="left:489px;top:206px;" width="8" height="5.5" viewBox="0 0 8 5.5"><polyline points="0.7,0.7 4.0,4.2 7.3,0.7" fill="none" stroke="#a8a8a8" stroke-width="1.0"/></svg>
<div class="b" style="left:240px;top:230px;width:660px;height:393px;background:#ffffff;border:1px solid #8b9096;"></div>
<div class="b" style="left:439px;top:231px;width:1px;height:22px;background:#e5e5e5;"></div>
<div class="b" style="left:547px;top:231px;width:1px;height:22px;background:#e5e5e5;"></div>
<div class="b" style="left:634px;top:231px;width:1px;height:22px;background:#e5e5e5;"></div>
<div class="t" style="left:245.5px;top:236.00px;font-size:12px;color:#000;transform:scaleX(0.9500);transform-origin:0 0;">Property</div>
<div class="t" style="left:443.7px;top:236.00px;font-size:12px;color:#000;transform:scaleX(0.9500);transform-origin:0 0;">Value</div>
<div class="t" style="left:552.2px;top:236.00px;font-size:12px;color:#000;transform:scaleX(0.9500);transform-origin:0 0;">Units</div>
<svg class="b" style="left:245.6px;top:258.4px;" width="9.2" height="6" viewBox="0 0 9.2 6"><polyline points="0.7,0.7 4.6,4.7 8.5,0.7" fill="none" stroke="#3c3c3c" stroke-width="1.7"/></svg>
<div class="t" style="left:264px;top:255.00px;font-size:12px;color:#000;transform:scaleX(0.9540);transform-origin:0 0;">Mechanical properties</div>
<div class="t" style="left:283.4px;top:272.00px;font-size:12px;color:#000;transform:scaleX(0.9599);transform-origin:0 0;">Elasticity modulus</div>
<div class="t" style="left:442.5px;top:272.00px;font-size:12px;color:#000;transform:scaleX(0.8844);transform-origin:0 0;">2.1000000000e+11</div>
<div class="t" style="left:551.5px;top:272.00px;font-size:12px;color:#000;transform:scaleX(0.9992);transform-origin:0 0;">[pa]</div>
<div class="t" style="left:283.4px;top:288.00px;font-size:12px;color:#000;transform:scaleX(0.9550);transform-origin:0 0;">Poisson's ratio</div>
<div class="t" style="left:442.5px;top:288.00px;font-size:12px;color:#000;transform:scaleX(0.9031);transform-origin:0 0;">3.0000000000e-01</div>
<div class="t" style="left:551.5px;top:288.00px;font-size:12px;color:#000;transform:scaleX(0.9611);transform-origin:0 0;">[dimensionless]</div>
<div class="t" style="left:283.4px;top:305.00px;font-size:12px;color:#000;transform:scaleX(0.9550);transform-origin:0 0;">Density</div>
<div class="t" style="left:442.5px;top:305.00px;font-size:12px;color:#000;transform:scaleX(0.8768);transform-origin:0 0;">7.8500000000e+03</div>
<div class="t" style="left:551.5px;top:305.00px;font-size:12px;color:#000;transform:scaleX(1.0782);transform-origin:0 0;">[kg/m^3]</div>
<div class="t" style="left:283.4px;top:321.00px;font-size:12px;color:#000;transform:scaleX(0.9550);transform-origin:0 0;">Ultimate tensile stress</div>
<div class="t" style="left:442.5px;top:321.00px;font-size:12px;color:#000;transform:scaleX(0.8768);transform-origin:0 0;">3.4500000000e+08</div>
<div class="t" style="left:551.5px;top:321.00px;font-size:12px;color:#000;transform:scaleX(0.9992);transform-origin:0 0;">[pa]</div>
<div class="t" style="left:283.4px;top:337.00px;font-size:12px;color:#000;transform:scaleX(0.9550);transform-origin:0 0;">Tensile yield stress</div>
<div class="t" style="left:442.5px;top:337.00px;font-size:12px;color:#000;transform:scaleX(0.8768);transform-origin:0 0;">2.0700000000e+08</div>
<div class="t" style="left:551.5px;top:337.00px;font-size:12px;color:#000;transform:scaleX(0.9992);transform-origin:0 0;">[pa]</div>
<div class="t" style="left:283.4px;top:354.00px;font-size:12px;color:#000;transform:scaleX(0.9230);transform-origin:0 0;">Compressive yield stress</div>
<div class="t" style="left:442.5px;top:354.00px;font-size:12px;color:#000;transform:scaleX(0.8768);transform-origin:0 0;">2.0700000000e+08</div>
<div class="t" style="left:551.5px;top:354.00px;font-size:12px;color:#000;transform:scaleX(0.9992);transform-origin:0 0;">[pa]</div>
<div class="t" style="left:283.4px;top:372.00px;font-size:12px;color:#000;transform:scaleX(0.9670);transform-origin:0 0;">Default failure criterion</div>
<div class="b" style="left:440px;top:369px;width:106px;height:18px;background:#cccccc;border:1px solid #bfbfbf;"></div>
<div class="t" style="left:443.6px;top:372.00px;font-size:12px;color:#a0a0a0;transform:scaleX(0.8953);transform-origin:0 0;">Von Mises Stress</div>
<svg class="b" style="left:535.5px;top:377px;" width="8" height="5.2" viewBox="0 0 8 5.2"><polyline points="0.7,0.7 4.0,3.9000000000000004 7.3,0.7" fill="none" stroke="#b0b0b0" stroke-width="1.0"/></svg>
<div class="t" style="left:283.4px;top:391.00px;font-size:12px;color:#000;transform:scaleX(0.9585);transform-origin:0 0;">Thermal expansion coefficient</div>
<div class="t" style="left:442.5px;top:391.00px;font-size:12px;color:#000;transform:scaleX(0.9031);transform-origin:0 0;">1.2000000000e-05</div>
<div class="t" style="left:551.5px;top:391.00px;font-size:12px;color:#000;transform:scaleX(0.9589);transform-origin:0 0;">[1/(degree C)]</div>
<svg class="b" style="left:245.6px;top:410.0px;" width="9.2" height="6" viewBox="0 0 9.2 6"><polyline points="0.7,0.7 4.6,4.7 8.5,0.7" fill="none" stroke="#3c3c3c" stroke-width="1.7"/></svg>
<div class="t" style="left:264px;top:407.00px;font-size:12px;color:#000;transform:scaleX(0.9432);transform-origin:0 0;">Thermal properties</div>
<div class="t" style="left:283.4px;top:423.00px;font-size:12px;color:#000;transform:scaleX(0.9778);transform-origin:0 0;">Thermal conductivity</div>
<div class="t" style="left:442.5px;top:423.00px;font-size:12px;color:#000;transform:scaleX(0.8768);transform-origin:0 0;">5.6000000000e+01</div>
<div class="t" style="left:551.5px;top:423.00px;font-size:12px;color:#000;transform:scaleX(1.0192);transform-origin:0 0;">[W/(m*K)]</div>
<div class="t" style="left:283.4px;top:440.00px;font-size:12px;color:#000;transform:scaleX(0.9443);transform-origin:0 0;">Specific heat capacity</div>
<div class="t" style="left:442.5px;top:440.00px;font-size:12px;color:#000;transform:scaleX(0.8768);transform-origin:0 0;">1.0000000000e+02</div>
<div class="t" style="left:551.5px;top:440.00px;font-size:12px;color:#000;transform:scaleX(0.9728);transform-origin:0 0;">[J/(kg*K)]</div>
<div class="b" style="left:12px;top:648px;width:24px;height:20px;background:#e1e1e1;border:1px solid #b4b4b4;"></div>
<svg class="b" style="left:19.2px;top:651.5px;" width="11" height="15" viewBox="0 0 11 15"><path d="M1.4,4.3 C1.4,2.0 3.1,0.9 5.0,0.9 C7.1,0.9 8.7,2.2 8.7,4.1 C8.7,6.0 7.2,6.7 6.1,7.6 C5.2,8.3 4.9,9.0 4.9,10.3" fill="none" stroke="#2f6396" stroke-width="2.3" stroke-linecap="round"/><circle cx="4.9" cy="12.9" r="1.25" fill="#2f6396"/></svg>
<div class="b" style="left:45px;top:648px;width:24px;height:20px;background:#e1e1e1;border:1px solid #b4b4b4;"></div>
<svg class="b" style="left:50.1px;top:651.9px;" width="15" height="15" viewBox="0 0 15 15"><polygon points="6.03,3.46 6.47,0.98 8.53,0.98 8.97,3.46 9.32,3.60 11.38,2.16 12.84,3.62 11.40,5.68 11.54,6.03 14.02,6.47 14.02,8.53 11.54,8.97 11.40,9.32 12.84,11.38 11.38,12.84 9.32,11.40 8.97,11.54 8.53,14.02 6.47,14.02 6.03,11.54 5.68,11.40 3.62,12.84 2.16,11.38 3.60,9.32 3.46,8.97 0.98,8.53 0.98,6.47 3.46,6.03 3.60,5.68 2.16,3.62 3.62,2.16 5.68,3.60" fill="#2a5590" stroke="#2a5590" stroke-width="0.6" stroke-linejoin="round"/><circle cx="7.5" cy="7.5" r="3.3" fill="#9fb3cc"/><circle cx="7.5" cy="7.5" r="2.4" fill="#2a5590"/><rect x="6.5" y="6.5" width="2" height="2" fill="#a9bbd2"/></svg>
<div class="b" style="left:633px;top:648px;width:81px;height:18px;background:#e1e1e1;border:1px solid #bababa;"></div>
<div class="t" style="left:636.8px;top:654.00px;font-size:10.0px;color:#000;transform:scaleX(0.9759);transform-origin:0 0;">Apply to all welds</div>
<div class="b" style="left:723px;top:648px;width:106px;height:18px;background:#e1e1e1;border:1px solid #bababa;"></div>
<div class="t" style="left:726.7px;top:654.00px;font-size:10.0px;color:#000;transform:scaleX(0.9625);transform-origin:0 0;">Apply to selected welds</div>
<div class="b" style="left:839px;top:648px;width:69px;height:18px;background:#e1e1e1;border:1px solid #bababa;"></div>
<div class="t" style="left:862.25px;top:654.00px;font-size:10.0px;color:#000;transform:scaleX(0.9578);transform-origin:0 0;">Close</div>
<div class="b" style="left:11.5px;top:676px;width:899px;height:19.5px;background:#ffffff;"></div>
<div class="t" style="left:17.6px;top:680.00px;font-size:12px;color:#000;transform:scaleX(0.9474);transform-origin:0 0;">Select seam welds to apply material to</div>
</body></html>
